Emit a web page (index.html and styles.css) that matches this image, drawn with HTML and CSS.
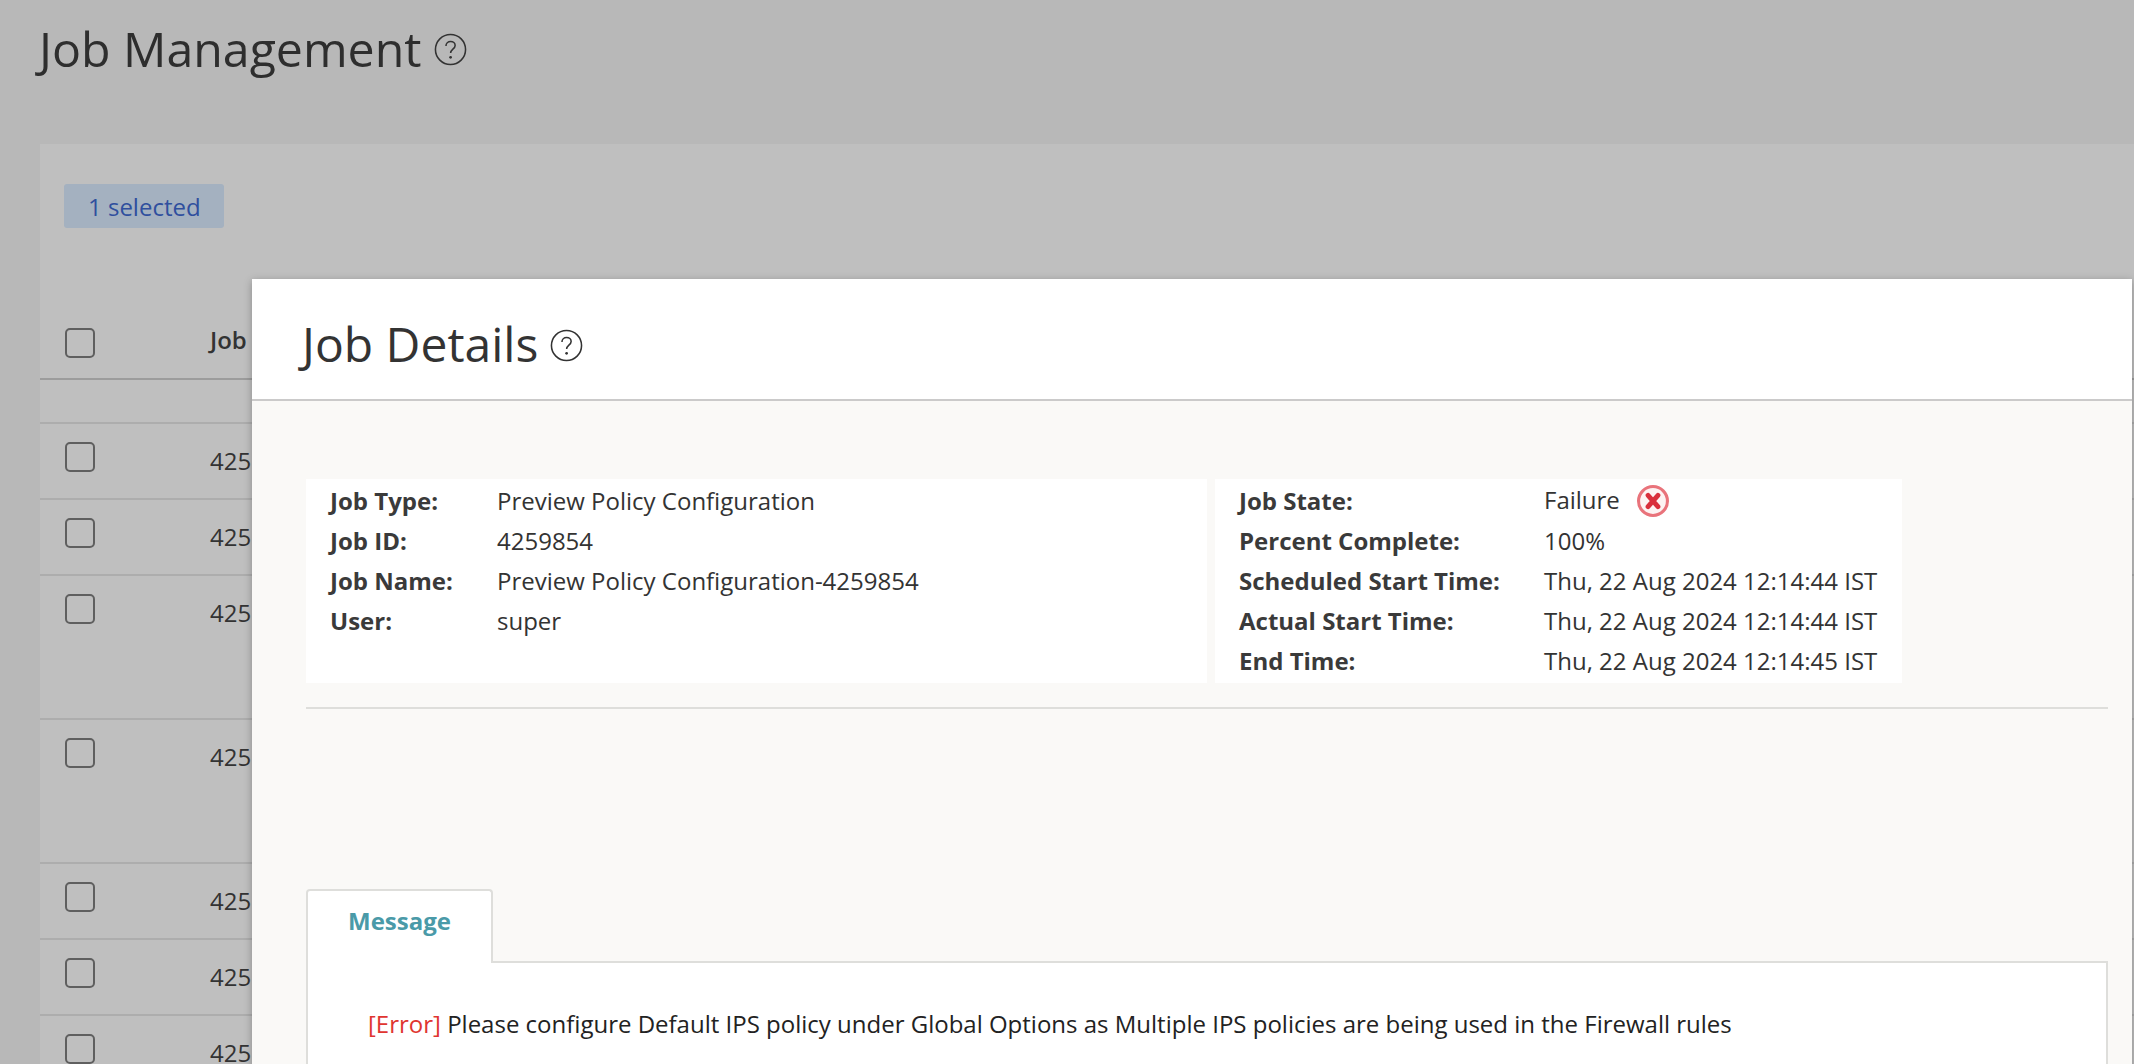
FILE: index.html
```html
<!DOCTYPE html>
<html lang="en">
<head>
    <meta charset="UTF-8">
    <title>Job Management</title>
    <link rel="stylesheet" href="styles.css">
</head>
<body>
    <!-- Page behind the modal -->
    <div class="page">
        <div class="page-title">
            <h1>Job Management</h1>
            <svg class="help-icon" viewBox="0 0 32 32"><circle cx="16" cy="16" r="14.6"/><path d="M11.6 12.6c0-2.6 2-4.4 4.500-4.400s4.400 1.700 4.400 3.900c0 3.500-4.400 3.700-4.400 7.300"/><circle class="dot" cx="16.100" cy="23.600" r="1.300"/></svg>
        </div>
        <div class="panel">
            <div class="selected-badge">1 selected</div>
            <div class="table-head">
                <span class="checkbox"></span>
                <span class="head-label">Job</span>
            </div>
            <div class="table-spacer"></div>
            <div class="row"><span class="checkbox"></span><span class="cell">425</span></div>
            <div class="row"><span class="checkbox"></span><span class="cell">425</span></div>
            <div class="row row-tall"><span class="checkbox"></span><span class="cell">425</span></div>
            <div class="row row-tall"><span class="checkbox"></span><span class="cell">425</span></div>
            <div class="row"><span class="checkbox"></span><span class="cell">425</span></div>
            <div class="row"><span class="checkbox"></span><span class="cell">425</span></div>
            <div class="row"><span class="checkbox"></span><span class="cell">425</span></div>
        </div>
    </div>

    <!-- Job Details modal -->
    <div class="modal">
        <div class="modal-header">
            <h2>Job Details</h2>
            <svg class="help-icon" viewBox="0 0 32 32"><circle cx="16" cy="16" r="14.6"/><path d="M11.6 12.6c0-2.6 2-4.4 4.500-4.400s4.400 1.700 4.400 3.900c0 3.500-4.400 3.700-4.400 7.300"/><circle class="dot" cx="16.100" cy="23.600" r="1.300"/></svg>
        </div>
        <div class="modal-body">
            <div class="summary">
                <div class="info-box info-left">
                    <div class="info-row"><span class="info-label">Job Type:</span><span>Preview Policy Configuration</span></div>
                    <div class="info-row"><span class="info-label">Job ID:</span><span>4259854</span></div>
                    <div class="info-row"><span class="info-label">Job Name:</span><span>Preview Policy Configuration-4259854</span></div>
                    <div class="info-row"><span class="info-label">User:</span><span>super</span></div>
                </div>
                <div class="info-box info-right">
                    <div class="info-row"><span class="info-label">Job State:</span><span class="state">Failure
                        <svg class="state-icon" viewBox="0 0 24 24"><circle cx="12" cy="12" r="10.200"/><path d="M8.500 8l7 8M15.500 8l-7 8"/></svg></span></div>
                    <div class="info-row"><span class="info-label">Percent Complete:</span><span>100%</span></div>
                    <div class="info-row"><span class="info-label">Scheduled Start Time:</span><span>Thu, 22 Aug 2024 12:14:44 IST</span></div>
                    <div class="info-row"><span class="info-label">Actual Start Time:</span><span>Thu, 22 Aug 2024 12:14:44 IST</span></div>
                    <div class="info-row"><span class="info-label">End Time:</span><span>Thu, 22 Aug 2024 12:14:45 IST</span></div>
                </div>
            </div>
            <div class="divider"></div>
            <div class="tabs"><div class="tab">Message</div></div>
            <div class="tab-content">
                <p class="message"><span class="error-tag">[Error]</span> Please configure Default IPS policy under Global Options as Multiple IPS policies are being used in the Firewall rules</p>
            </div>
        </div>
    </div>
</body>
</html>
```

FILE: styles.css
```css
html, body {
    margin: 0;
    padding: 0;
    height: 100%;
    overflow: hidden;
}

body {
    position: relative;
    font-family: "Open Sans", "Liberation Sans", sans-serif;
    font-size: 24px;
    color: #333;
    background-color: #b8b8b8;
}

.help-icon {
    fill: none;
    stroke: #333;
    stroke-width: 1.500;
}

.help-icon .dot {
    fill: #333;
    stroke: none;
}

/* Background page */
.page {
    padding: 12px 0 0 40px;
    height: 100%;
    box-sizing: border-box;
}

.page-title {
    display: flex;
    align-items: center;
    gap: 12px;
    height: 72px;
    margin-left: -1px;
}

.page-title h1 {
    margin: 0;
    font-size: 48.250px;
    font-weight: 400;
    line-height: 72px;
    color: #2e2e2e;
}

.page-title .help-icon {
    width: 33px;
    height: 33px;
    margin-top: 2px;
}

.panel {
    margin-top: 60px;
    background-color: #bfbfbf;
    padding-top: 40px;
    height: 100%;
}

.selected-badge {
    margin-left: 24px;
    height: 44px;
    line-height: 46px;
    padding-left: 24px;
    box-sizing: border-box;
    width: 160px;
    color: #2f4f9e;
    background-color: #a4b1c0;
    border-radius: 3px;
}

.table-head {
    display: flex;
    height: 152px;
    box-sizing: border-box;
    align-items: flex-end;
    padding-bottom: 20px;
    border-bottom: 2px solid #9c9c9c;
}

.checkbox {
    flex: none;
    box-sizing: border-box;
    width: 30px;
    height: 30px;
    margin-left: 25px;
    border: 2px solid #5f5f5f;
    border-radius: 5px;
}

.head-label {
    margin-left: 115px;
    margin-bottom: 3px;
    font-size: 24px;
    font-weight: 600;
    line-height: 30px;
}

.table-spacer {
    height: 42px;
    border-bottom: 2px solid #adadad;
}

.row {
    display: flex;
    align-items: flex-start;
    box-sizing: border-box;
    height: 76px;
    padding-top: 18px;
    border-bottom: 2px solid #adadad;
}

.row-tall {
    height: 144px;
}

.cell {
    margin-left: 115px;
    margin-top: 2px;
    line-height: 34px;
}

/* Modal */
.modal {
    position: absolute;
    left: 252px;
    top: 279px;
    width: 1880px;
    height: 800px;
    background-color: #faf9f7;
    box-shadow: 0 2px 8px rgba(0, 0, 0, 0.28);
}

.modal-header {
    display: flex;
    align-items: center;
    gap: 12px;
    height: 122px;
    box-sizing: border-box;
    padding: 10px 0 0 50px;
    background-color: white;
    border-bottom: 2px solid #cbcaca;
}

.modal-header h2 {
    margin: 0;
    font-size: 48px;
    font-weight: 400;
    line-height: 72px;
    color: #333;
}

.modal-header .help-icon {
    width: 33px;
    height: 33px;
    margin-top: 3px;
}

.modal-body {
    padding: 78px 24px 0 54px;
}

.summary {
    display: flex;
    gap: 8px;
}

.info-box {
    background-color: white;
    height: 204px;
    box-sizing: border-box;
    padding: 2px 24px 0;
}

.info-left {
    width: 901px;
}

.info-right {
    width: 687px;
}

.info-row {
    display: flex;
    height: 40px;
    line-height: 40px;
}

.info-label {
    font-weight: 700;
    color: #3a3a3a;
}

.info-left .info-label {
    width: 167px;
}

.info-right .info-label {
    width: 305px;
}

.state {
    display: flex;
    align-items: center;
    gap: 16px;
    height: 38px;
}

.state-icon {
    width: 34px;
    height: 34px;
    margin-top: 2px;
    fill: #fdf3f3;
    stroke: #e9737b;
    stroke-width: 2.200;
}

.state-icon path {
    stroke: #d92f3c;
    stroke-width: 3.400;
    stroke-linecap: round;
}

.divider {
    margin-top: 24px;
    height: 2px;
    background-color: #dededb;
}

.tabs {
    display: flex;
    margin-top: 180px;
}

.tab {
    width: 187px;
    height: 74px;
    box-sizing: border-box;
    margin-bottom: -2px;
    position: relative;
    line-height: 60px;
    text-align: center;
    font-weight: 700;
    color: #4a9aa8;
    background-color: white;
    border: 2px solid #dededb;
    border-bottom: none;
    border-radius: 4px 4px 0 0;
}

.tab-content {
    background-color: white;
    border: 2px solid #dededb;
    padding: 41px 60px;
    min-height: 300px;
}

.message {
    margin: 0;
    line-height: 40px;
    color: #222;
}

.error-tag {
    color: #e03530;
}
```
